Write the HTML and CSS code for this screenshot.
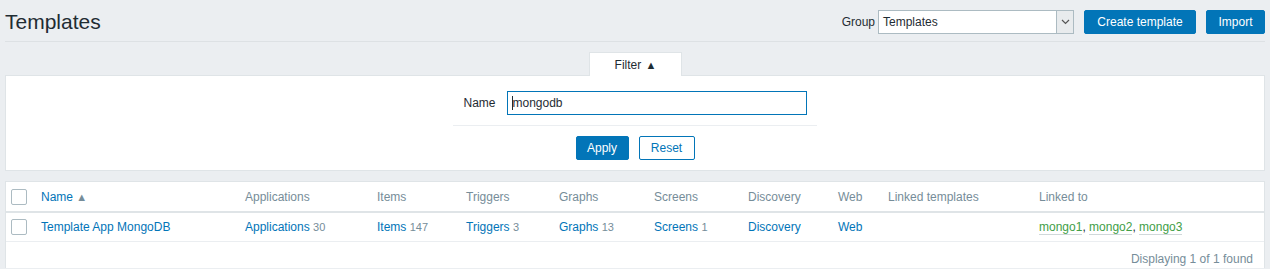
FILE: index.html
```html
<!DOCTYPE html>
<html>
<head>
<meta charset="utf-8">
<link rel="stylesheet" href="styles.css">
</head>
<body>
<div class="page">
  <header class="header">
    <h1 class="title">Templates</h1>
    <div class="controls">
      <label class="group-label">Group</label>
      <div class="select">
        <span class="select-value">Templates</span>
        <span class="select-arrow"><svg width="9" height="6" viewBox="0 0 9 6"><path d="M1 1 L4.5 4.5 L8 1" fill="none" stroke="#555" stroke-width="1.2"/></svg></span>
      </div>
      <button class="btn btn-create">Create template</button>
      <button class="btn btn-import">Import</button>
    </div>
  </header>

  <div class="filter">
    <div class="filter-tabs">
      <div class="filter-tab">Filter <span class="tri">&#9650;</span></div>
    </div>
    <div class="filter-box">
      <div class="filter-row">
        <label class="filter-label">Name</label>
        <div class="input"><span class="caret"></span>mongodb</div>
      </div>
      <div class="filter-sep"></div>
      <div class="filter-buttons">
        <button class="btn btn-apply">Apply</button>
        <button class="btn btn-alt">Reset</button>
      </div>
    </div>
  </div>

  <div class="list">
    <table class="table">
      <thead>
        <tr>
          <th class="c-check"><span class="checkbox"></span></th>
          <th class="c-name"><a class="sort">Name <span class="sort-tri">&#9650;</span></a></th>
          <th class="c-apps">Applications</th>
          <th class="c-items">Items</th>
          <th class="c-trig">Triggers</th>
          <th class="c-graphs">Graphs</th>
          <th class="c-screens">Screens</th>
          <th class="c-disc">Discovery</th>
          <th class="c-web">Web</th>
          <th class="c-linked">Linked templates</th>
          <th class="c-to">Linked to</th>
        </tr>
      </thead>
      <tbody>
        <tr>
          <td class="c-check"><span class="checkbox"></span></td>
          <td><a class="link">Template App MongoDB</a></td>
          <td><a class="link">Applications</a> <sup class="count">30</sup></td>
          <td><a class="link">Items</a> <sup class="count">147</sup></td>
          <td><a class="link">Triggers</a> <sup class="count">3</sup></td>
          <td><a class="link">Graphs</a> <sup class="count">13</sup></td>
          <td><a class="link">Screens</a> <sup class="count">1</sup></td>
          <td><a class="link">Discovery</a></td>
          <td><a class="link">Web</a></td>
          <td></td>
          <td><a class="green">mongo1</a>, <a class="green">mongo2</a>, <a class="green">mongo3</a></td>
        </tr>
      </tbody>
    </table>
    <div class="paging">Displaying 1 of 1 found</div>
  </div>
</div>
</body>
</html>
```

FILE: styles.css
```css
* { box-sizing: border-box; }
html, body { margin: 0; padding: 0; }
body {
  background: #ebeef1;
  font-family: Arial, "Liberation Sans", sans-serif;
  font-size: 12px;
  color: #1f2c33;
}
.page { padding: 0 5px; }

.header {
  display: flex;
  justify-content: space-between;
  align-items: flex-start;
  height: 42px;
  border-bottom: 1px solid #dde1e4;
}
.title {
  margin: 0;
  padding-top: 10px;
  font-size: 21px;
  font-weight: normal;
  line-height: 24px;
  color: #1f2c33;
}
.controls {
  display: flex;
  align-items: center;
  padding-top: 10px;
}
.group-label { margin-right: 3px; }
.select {
  display: flex;
  width: 196px;
  height: 24px;
  border: 1px solid #acbbc2;
  background: #fff;
  margin-right: 10px;
}
.select-value {
  flex: 1;
  padding-left: 4px;
  line-height: 22px;
}
.select-arrow {
  width: 17px;
  background: #e8ebed;
  border-left: 1px solid #acbbc2;
  display: flex;
  align-items: center;
  justify-content: center;
}
.btn {
  font-family: inherit;
  font-size: 12px;
  height: 24px;
  padding: 0;
  background: #0275b8;
  color: #fff;
  border: 1px solid #0275b8;
  border-radius: 2px;
  margin: 0;
  line-height: 22px;
  text-align: center;
}
.btn-create { width: 112px; }
.btn-import { width: 59px; margin-left: 10px; }

.filter { margin-top: 10px; }
.filter-tabs { display: flex; justify-content: center; }
.filter-tab {
  width: 93px;
  height: 24px;
  margin-bottom: -1px;
  position: relative;
  background: #fff;
  border: 1px solid #dfe4e7;
  border-bottom: none;
  text-align: center;
  line-height: 24px;
  margin-left: 1px;
}
.tri { font-size: 11px; vertical-align: 0; margin-left: 1px; }
.filter-box {
  background: #fff;
  border: 1px solid #dfe4e7;
  padding: 15px 0 10px;
  display: flex;
  flex-direction: column;
  align-items: center;
}
.filter-row {
  display: flex;
  align-items: center;
}
.filter-label { margin-right: 11px; }
.input {
  width: 300px;
  height: 24px;
  border: 1px solid #0275b8;
  padding-left: 4px;
  line-height: 22px;
  color: #1f2c33;
  display: flex;
  align-items: center;
}
.caret {
  display: inline-block;
  width: 1px;
  height: 14px;
  background: #1f2c33;
}
.filter-sep {
  width: 364px;
  height: 1px;
  background: #ebeef1;
  margin: 10px 0;
}
.filter-buttons { display: flex; gap: 10px; }
.btn-apply { width: 53px; }
.btn-alt { background: #fff; color: #0275b8; width: 56px; }

.list {
  margin-top: 10px;
  background: #fff;
  border: 1px solid #dfe4e7;
  border-bottom: none;
}
.table { width: 100%; border-collapse: collapse; }
.table th, .table td {
  text-align: left;
  padding: 0;
  white-space: nowrap;
}
.table th {
  height: 30px;
  color: #768d99;
  font-weight: normal;
  border-bottom: 2px solid #dfe4e7;
}
.table td {
  height: 29px;
  border-bottom: 1px solid #ebeef1;
}
.c-check { width: 35px; padding-left: 5px !important; }
.checkbox {
  display: block;
  width: 16px;
  height: 16px;
  border: 1px solid #acbbc2;
  border-radius: 2px;
  background: #fff;
}
.c-name { width: 204px; }
.c-apps { width: 132px; }
.c-items { width: 89px; }
.c-trig { width: 93px; }
.c-graphs { width: 95px; }
.c-screens { width: 94px; }
.c-disc { width: 90px; }
.c-web { width: 50px; }
.c-linked { width: 151px; }
.sort { color: #0275b8; }
.sort-tri { font-size: 11px; color: #768d99; vertical-align: 0; }
.link { color: #0275b8; }
.count { color: #768d99; font-size: 11px; vertical-align: baseline; }
.green {
  color: #429e47;
  border-bottom: 1px solid #d0d8da;
}
.paging {
  text-align: right;
  color: #768d99;
  padding: 10px 11px 0 0;
  height: 26px;
}
```
